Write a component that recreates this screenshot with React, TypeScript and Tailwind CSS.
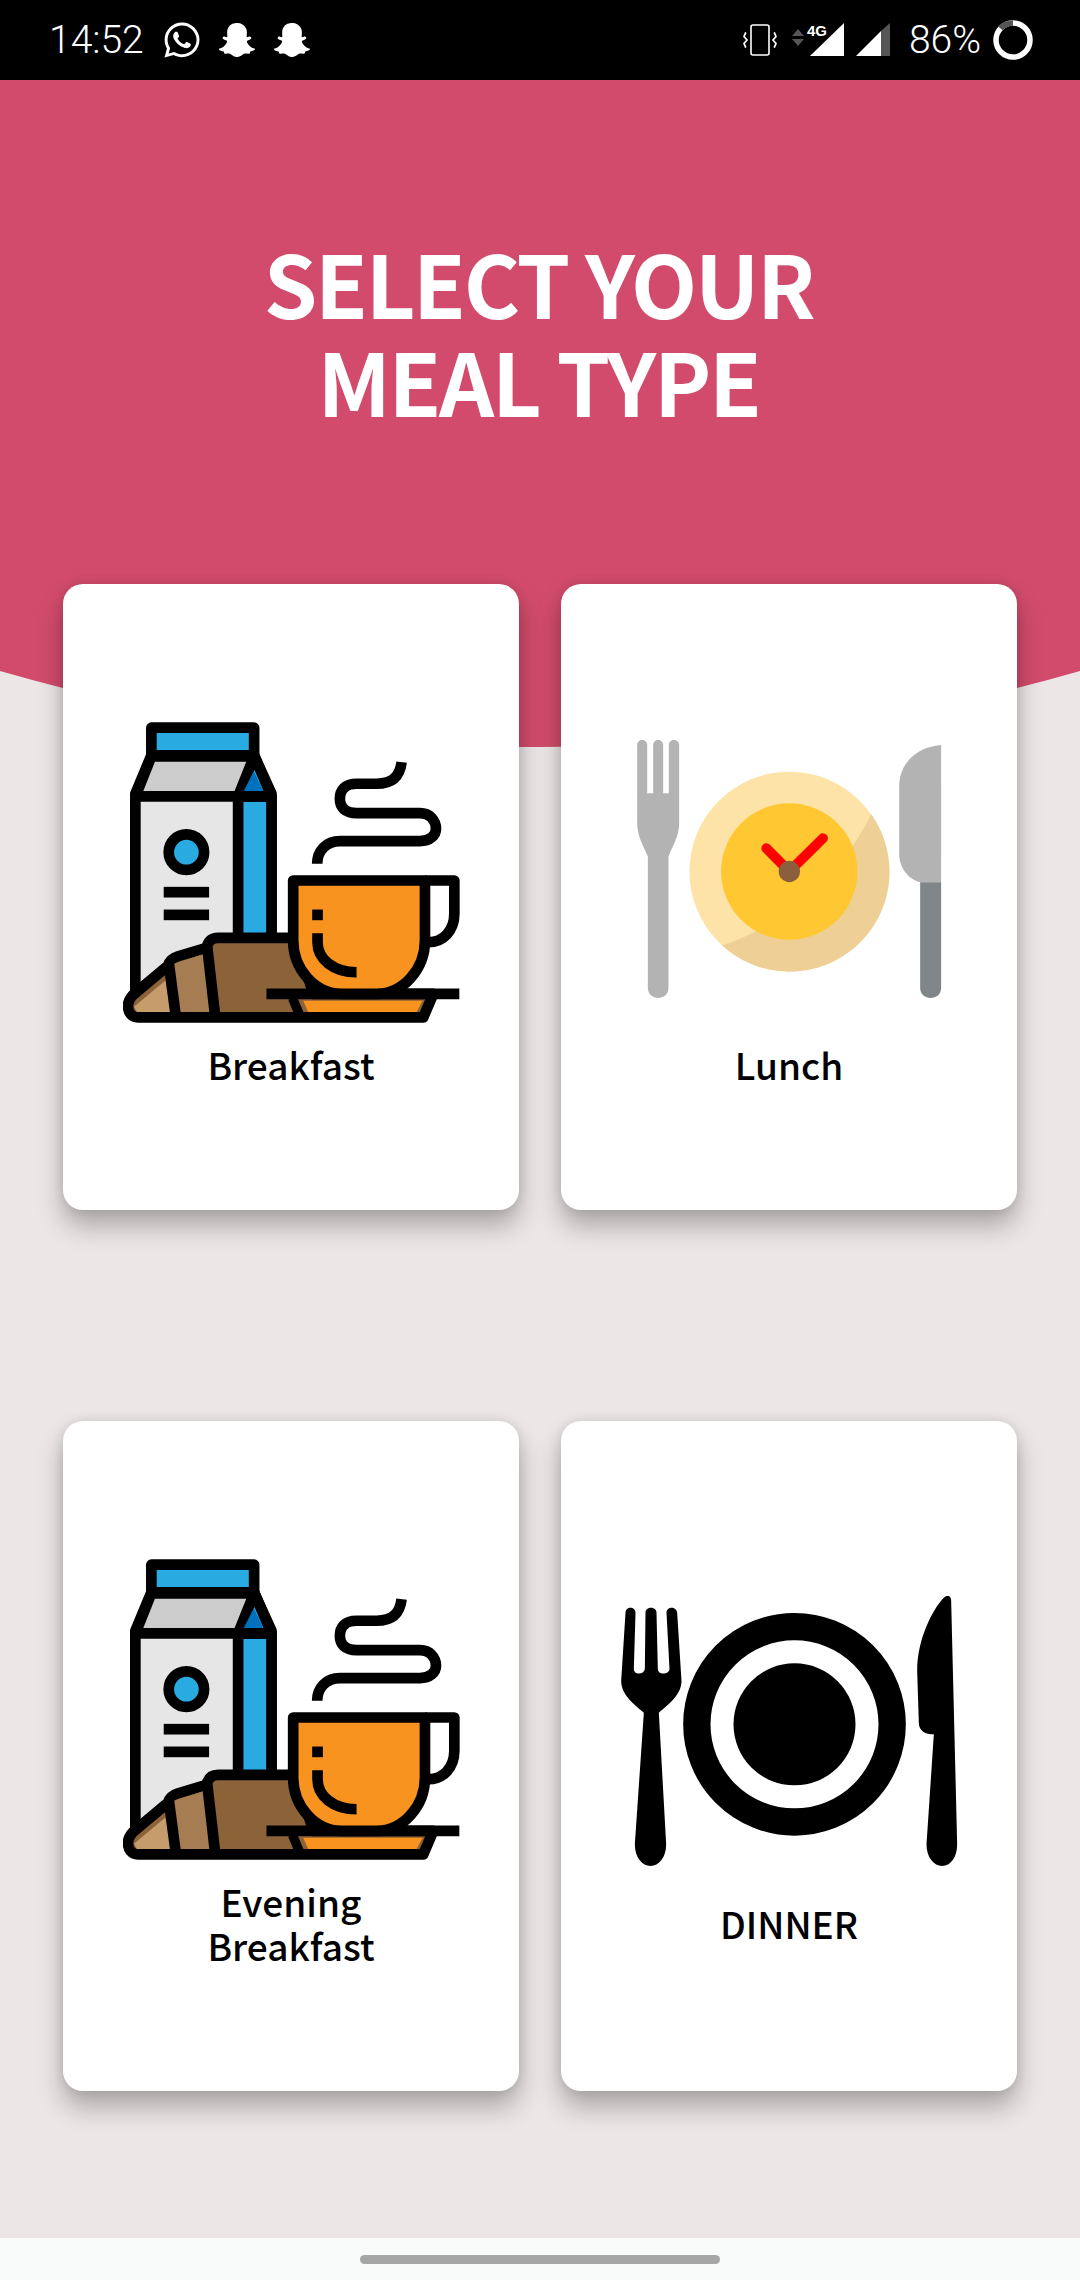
import type { ReactNode } from "react";
import { FaWhatsapp, FaSnapchatGhost } from "react-icons/fa";

const cjk = "font-['Noto_Sans_CJK_SC','Noto_Sans',sans-serif]";

function BreakfastArt() {
  return (
    <svg viewBox="70 65 1010 905" className="w-[337px] h-[302px] block" aria-hidden="true">
      <g stroke="#000" strokeWidth="32" strokeLinejoin="round">
        <rect x="155" y="82" width="308" height="86" fill="#29ABE2" />
        <path d="M155 165 L107 280 V880 H515 V280 L463 165 Z" fill="#E6E6E6" />
        <path d="M415 288 H515 V720 H415 Z" fill="#29ABE2" />
        <path d="M463 165 L415 288 H515 Z" fill="#29ABE2" />
        <path d="M155 168 H463 L415 288 H107 Z" fill="#CCCCCC" />
      </g>
      <path d="M462 212 L490 272 H432 Z" fill="#0071BC" />
      <circle cx="260" cy="455" r="53" fill="#29ABE2" stroke="#000" strokeWidth="32" />
      <rect x="192" y="559" width="136" height="32" />
      <rect x="192" y="627" width="136" height="32" />
      <path d="M85 915 C85 895 100 882 112 873 L205 795 C208 782 218 772 235 767 L320 742 C325 722 335 712 355 712 H590 L640 880 H1000 L970 950 H115 C95 950 85 935 85 915 Z" fill="#8C6239" stroke="#000" strokeWidth="32" strokeLinejoin="round" />
      <path d="M103 918 L197 840 L214 934 H112 Z" fill="#C69C6D" />
      <path d="M220 790 L312 760 L335 934 H240 Z" fill="#A67C52" />
      <path d="M207 785 L228 945 M322 735 L346 945" fill="none" stroke="#000" strokeWidth="32" />
      <path d="M500 880 H1078" stroke="#000" strokeWidth="32" />
      <path d="M610 900 H968 L950 934 H625 Z" fill="#F7931E" />
      <path d="M578 892 L600 945" stroke="#000" strokeWidth="28" />
      <path d="M975 540 H1063 V640 C1063 690 1030 725 985 725" fill="#fff" stroke="#000" strokeWidth="32" strokeLinejoin="round" />
      <path d="M580 540 H975 V720 C975 805 910 880 830 880 H725 C645 880 580 805 580 720 Z" fill="#F7931E" stroke="#000" strokeWidth="32" strokeLinejoin="round" />
      <rect x="637" y="627" width="32" height="32" />
      <path d="M653 698 V725 C653 775 700 815 770 815" fill="none" stroke="#000" strokeWidth="32" />
      <path d="M905 185 C900 225 880 250 830 250 H770 C735 250 720 270 720 295 C720 320 735 338 770 338 H960 C990 338 1008 360 1008 385 C1008 405 990 422 960 422 H720 C680 422 652 450 652 490" fill="none" stroke="#000" strokeWidth="32" />
    </svg>
  );
}

function LunchArt() {
  return (
    <svg viewBox="110 60 915 775" className="w-[305px] h-[258px] block" aria-hidden="true">
      <path d="M110 75 C110 55 140 55 140 75 V220 H158 V75 C158 55 188 55 188 75 V220 H205 V75 C205 55 236 55 236 75 V310 C236 350 215 380 204 410 V805 C204 845 142 845 142 805 V410 C130 380 110 350 110 310 Z" fill="#B3B3B3" />
      <circle cx="567" cy="455" r="300" fill="#FDE3A7" />
      <path d="M813 283 A300 300 0 0 1 365 677 C600 600 740 430 813 283 Z" fill="#EED097" />
      <circle cx="567" cy="455" r="205" fill="#FFC833" />
      <path d="M567 455 L498 385 M567 455 L668 355" stroke="#FF0000" strokeWidth="30" strokeLinecap="round" />
      <circle cx="567" cy="455" r="32" fill="#8B5E3C" />
      <path d="M1023 75 C950 80 897 130 897 200 V400 C897 450 930 480 960 487 H1023 Z" fill="#B3B3B3" />
      <path d="M960 487 H1023 V805 C1023 845 960 845 960 805 Z" fill="#808587" />
    </svg>
  );
}

function DinnerArt() {
  return (
    <svg viewBox="62 75 1010 810" className="w-[337px] h-[270px] block" aria-hidden="true">
      <path d="M75 125 C75 105 105 105 105 125 L100 295 C100 312 130 312 133 295 L135 125 C135 105 168 105 168 125 L172 295 C172 312 205 312 207 295 L198 125 C198 105 228 105 230 125 L243 330 C243 370 205 400 175 425 L197 820 C197 860 175 885 150 885 C125 885 103 860 103 820 L130 425 C100 400 62 370 62 330 Z" fill="#000" />
      <circle cx="582" cy="460" r="293" fill="none" stroke="#000" strokeWidth="82" />
      <circle cx="582" cy="460" r="183" fill="#000" />
      <path d="M1030 80 C1045 68 1052 78 1052 90 L1070 820 C1070 860 1050 885 1025 885 C1000 885 978 860 978 820 L1000 490 C975 490 955 480 955 455 L950 300 C950 200 1000 110 1030 80 Z" fill="#000" />
    </svg>
  );
}

function StatusBar() {
  return (
    <div className="h-20 bg-black flex items-center justify-between pl-[49px] pr-[47px] text-white font-['Roboto',sans-serif] font-light text-[39px]">
      <div className="flex items-center">
        <span className="w-[113px] leading-none">14:52</span>
        <FaWhatsapp className="w-10 h-10" />
        <FaSnapchatGhost className="w-9 h-9 ml-[17px]" />
        <FaSnapchatGhost className="w-9 h-9 ml-[19px]" />
      </div>
      <div className="flex items-center">
        <svg viewBox="0 0 34 32" className="w-[34px] h-8" fill="none" stroke="#fff" aria-hidden="true">
          <rect x="8" y="1" width="18" height="30" rx="2" strokeWidth="1.6" />
          <path d="M2.5 9 L1 12.5 L4 16 L1 19.5 L2.5 23 M31.5 9 L33 12.5 L30 16 L33 19.5 L31.5 23" strokeWidth="1.8" strokeLinecap="round" strokeLinejoin="round" />
        </svg>
        <div className="relative ml-[15px] w-[98px] h-[36px]">
          <svg viewBox="0 0 98 36" className="w-[98px] h-[36px] block" aria-hidden="true">
            <path d="M0 14 L6 7 L12 14 Z M0 17 H12 L6 24 Z" fill="#555" />
            <path d="M18 34 L52 1 V34 Z" fill="#fff" />
            <path d="M64 34 L89 9 V34 Z" fill="#fff" />
            <path d="M89 9 L98 1 V34 H89 Z" fill="#555" />
          </svg>
          <span className="absolute left-[15px] top-px text-[15px] font-bold leading-none font-['Liberation_Sans',sans-serif]">4G</span>
        </div>
        <span className="ml-[19px] leading-none">86%</span>
        <svg viewBox="0 0 40 40" className="ml-3 w-10 h-10" fill="none" aria-hidden="true">
          <circle cx="20" cy="20" r="17" stroke="#fff" strokeWidth="5.5" />
          <path d="M7.5 8.5 A17 17 0 0 1 20 3" stroke="#555" strokeWidth="5.5" />
        </svg>
      </div>
    </div>
  );
}

function Card({ art, label, pt, gap, h }: { art: ReactNode; label: ReactNode; pt: string; gap: string; h: string }) {
  return (
    <div className={`relative bg-white rounded-[20px] shadow-[0_16px_26px_rgba(0,0,0,0.27),0_0_12px_rgba(0,0,0,0.1)] flex flex-col items-center ${pt} ${h}`}>
      {art}
      <div className={`${gap} ${cjk} text-[37px] leading-[44px] font-medium text-black text-center`}>{label}</div>
    </div>
  );
}

export default function App() {
  return (
    <div className="w-[1080px] h-[2280px] flex flex-col overflow-hidden bg-[#ECE6E6]">
      <StatusBar />
      <main className="flex-1">
        <header className={`h-[667px] bg-[#D24B6C] pt-[153px] pr-[3px] text-center text-white ${cjk} font-bold text-[86px] leading-[98px] tracking-[-2.3px] [clip-path:circle(1956px_at_540px_-1289px)]`}>
          SELECT YOUR
          <br />
          MEAL TYPE
        </header>
        <div className="-mt-[163px] px-[63px] grid grid-cols-2 gap-x-[42px] gap-y-[211px]">
          <Card art={<BreakfastArt />} label="Breakfast" pt="pt-[138px]" gap="mt-[18px]" h="h-[626px]" />
          <Card art={<LunchArt />} label="Lunch" pt="pt-[156px]" gap="mt-[44px]" h="h-[626px]" />
          <Card art={<BreakfastArt />} label={<>Evening<br />Breakfast</>} pt="pt-[138px]" gap="mt-[18px]" h="h-[670px]" />
          <Card art={<DinnerArt />} label="DINNER" pt="pt-[175px]" gap="mt-[35px]" h="h-[670px]" />
        </div>
      </main>
      <footer className="h-[42px] bg-[#F9FAFA] flex justify-center pt-[17px]">
        <div className="w-[360px] h-[9px] rounded-full bg-[#A6A6A6]" />
      </footer>
    </div>
  );
}
